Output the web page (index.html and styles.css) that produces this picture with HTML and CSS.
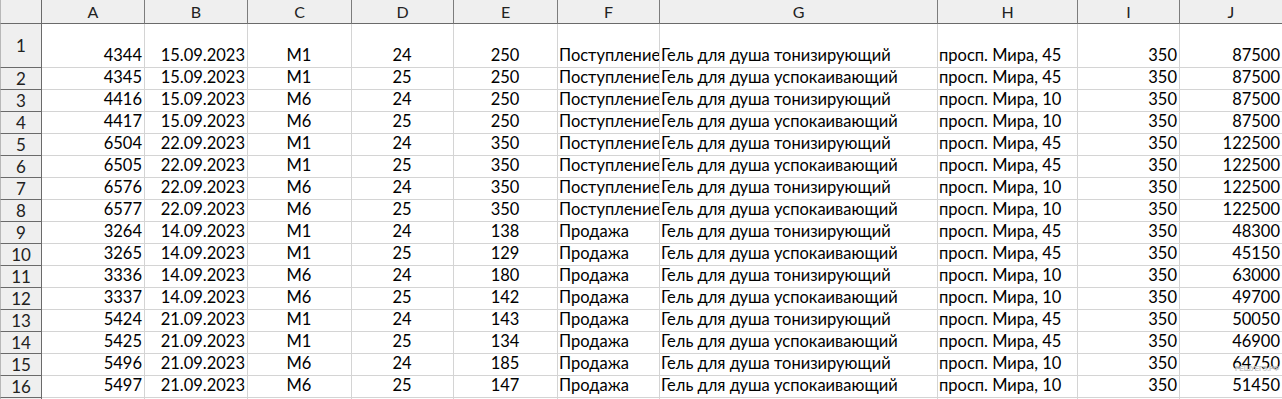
FILE: index.html
```html
<!DOCTYPE html>
<html lang="ru">
<head>
<meta charset="utf-8">
<title>Sheet</title>
<link rel="stylesheet" href="styles.css">
</head>
<body>
<div class="wrap">
<div class="sheet">
<div class="corner"></div>
<div class="ch">A</div><div class="ch">B</div><div class="ch">C</div><div class="ch">D</div><div class="ch">E</div><div class="ch">F</div><div class="ch">G</div><div class="ch">H</div><div class="ch">I</div><div class="ch">J</div>

<div class="rh">1</div><div class="c r">4344</div><div class="c r">15.09.2023</div><div class="c m">М1</div><div class="c m">24</div><div class="c m">250</div><div class="c">Поступление</div><div class="c">Гель для душа тонизирующий</div><div class="c">просп. Мира, 45</div><div class="c r">350</div><div class="c r">87500</div>
<div class="rh">2</div><div class="c r">4345</div><div class="c r">15.09.2023</div><div class="c m">М1</div><div class="c m">25</div><div class="c m">250</div><div class="c">Поступление</div><div class="c">Гель для душа успокаивающий</div><div class="c">просп. Мира, 45</div><div class="c r">350</div><div class="c r">87500</div>
<div class="rh">3</div><div class="c r">4416</div><div class="c r">15.09.2023</div><div class="c m">М6</div><div class="c m">24</div><div class="c m">250</div><div class="c">Поступление</div><div class="c">Гель для душа тонизирующий</div><div class="c">просп. Мира, 10</div><div class="c r">350</div><div class="c r">87500</div>
<div class="rh">4</div><div class="c r">4417</div><div class="c r">15.09.2023</div><div class="c m">М6</div><div class="c m">25</div><div class="c m">250</div><div class="c">Поступление</div><div class="c">Гель для душа успокаивающий</div><div class="c">просп. Мира, 10</div><div class="c r">350</div><div class="c r">87500</div>
<div class="rh">5</div><div class="c r">6504</div><div class="c r">22.09.2023</div><div class="c m">М1</div><div class="c m">24</div><div class="c m">350</div><div class="c">Поступление</div><div class="c">Гель для душа тонизирующий</div><div class="c">просп. Мира, 45</div><div class="c r">350</div><div class="c r">122500</div>
<div class="rh">6</div><div class="c r">6505</div><div class="c r">22.09.2023</div><div class="c m">М1</div><div class="c m">25</div><div class="c m">350</div><div class="c">Поступление</div><div class="c">Гель для душа успокаивающий</div><div class="c">просп. Мира, 45</div><div class="c r">350</div><div class="c r">122500</div>
<div class="rh">7</div><div class="c r">6576</div><div class="c r">22.09.2023</div><div class="c m">М6</div><div class="c m">24</div><div class="c m">350</div><div class="c">Поступление</div><div class="c">Гель для душа тонизирующий</div><div class="c">просп. Мира, 10</div><div class="c r">350</div><div class="c r">122500</div>
<div class="rh">8</div><div class="c r">6577</div><div class="c r">22.09.2023</div><div class="c m">М6</div><div class="c m">25</div><div class="c m">350</div><div class="c">Поступление</div><div class="c">Гель для душа успокаивающий</div><div class="c">просп. Мира, 10</div><div class="c r">350</div><div class="c r">122500</div>
<div class="rh">9</div><div class="c r">3264</div><div class="c r">14.09.2023</div><div class="c m">М1</div><div class="c m">24</div><div class="c m">138</div><div class="c">Продажа</div><div class="c">Гель для душа тонизирующий</div><div class="c">просп. Мира, 45</div><div class="c r">350</div><div class="c r">48300</div>
<div class="rh">10</div><div class="c r">3265</div><div class="c r">14.09.2023</div><div class="c m">М1</div><div class="c m">25</div><div class="c m">129</div><div class="c">Продажа</div><div class="c">Гель для душа успокаивающий</div><div class="c">просп. Мира, 45</div><div class="c r">350</div><div class="c r">45150</div>
<div class="rh">11</div><div class="c r">3336</div><div class="c r">14.09.2023</div><div class="c m">М6</div><div class="c m">24</div><div class="c m">180</div><div class="c">Продажа</div><div class="c">Гель для душа тонизирующий</div><div class="c">просп. Мира, 10</div><div class="c r">350</div><div class="c r">63000</div>
<div class="rh">12</div><div class="c r">3337</div><div class="c r">14.09.2023</div><div class="c m">М6</div><div class="c m">25</div><div class="c m">142</div><div class="c">Продажа</div><div class="c">Гель для душа успокаивающий</div><div class="c">просп. Мира, 10</div><div class="c r">350</div><div class="c r">49700</div>
<div class="rh">13</div><div class="c r">5424</div><div class="c r">21.09.2023</div><div class="c m">М1</div><div class="c m">24</div><div class="c m">143</div><div class="c">Продажа</div><div class="c">Гель для душа тонизирующий</div><div class="c">просп. Мира, 45</div><div class="c r">350</div><div class="c r">50050</div>
<div class="rh">14</div><div class="c r">5425</div><div class="c r">21.09.2023</div><div class="c m">М1</div><div class="c m">25</div><div class="c m">134</div><div class="c">Продажа</div><div class="c">Гель для душа успокаивающий</div><div class="c">просп. Мира, 45</div><div class="c r">350</div><div class="c r">46900</div>
<div class="rh">15</div><div class="c r">5496</div><div class="c r">21.09.2023</div><div class="c m">М6</div><div class="c m">24</div><div class="c m">185</div><div class="c">Продажа</div><div class="c">Гель для душа тонизирующий</div><div class="c">просп. Мира, 10</div><div class="c r">350</div><div class="c r">64750</div>
<div class="rh">16</div><div class="c r">5497</div><div class="c r">21.09.2023</div><div class="c m">М6</div><div class="c m">25</div><div class="c m">147</div><div class="c">Продажа</div><div class="c">Гель для душа успокаивающий</div><div class="c">просп. Мира, 10</div><div class="c r">350</div><div class="c r">51450</div>
<div class="rh"></div><div class="c"></div><div class="c"></div><div class="c"></div><div class="c"></div><div class="c"></div><div class="c"></div><div class="c"></div><div class="c"></div><div class="c"></div><div class="c"></div>
</div>
<div class="mark">РЕШУЕГЭ.РФ</div>
</div>
</body>
</html>
```
FILE: styles.css
```css
html, body {
  margin: 0;
  padding: 0;
  background: #ffffff;
  overflow: hidden;
}

.wrap {
  position: relative;
  width: 1282px;
  height: 399px;
  overflow: hidden;
}

.sheet {
  display: grid;
  grid-template-columns: 42px 103px 103px 104px 102px 104px 102px 278px 140px 102px 103px;
  grid-template-rows: 24px 44px repeat(16, 22px) 22px;
  font-family: Lato, "Noto Sans", sans-serif;
  font-size: 16.5px;
  color: #000;
}

.corner {
  background: #efefef;
  border-left: 1px solid #b8b8b8;
  border-right: 1px solid #6a6a6a;
  border-bottom: 1px solid #6a6a6a;
  box-sizing: border-box;
}

.ch {
  background: #efefef;
  border-right: 1px solid #7c7c7c;
  border-bottom: 1px solid #6a6a6a;
  box-sizing: border-box;
  display: flex;
  align-items: center;
  justify-content: center;
  color: #222;
  font-size: 16px;
  line-height: 20px;
  padding-top: 1px;
}

.rh {
  background: #efefef;
  border-left: 1px solid #b8b8b8;
  border-right: 1px solid #6a6a6a;
  border-bottom: 1px solid #6a6a6a;
  box-sizing: border-box;
  display: flex;
  align-items: center;
  justify-content: center;
  color: #222;
  font-size: 17px;
  line-height: 20px;
}

.c {
  border-right: 1px solid #d4d4d4;
  border-bottom: 1px solid #d4d4d4;
  box-sizing: border-box;
  display: flex;
  align-items: flex-end;
  justify-content: flex-start;
  padding: 0 2px 2px 1px;
  line-height: 20px;
  white-space: nowrap;
  overflow: hidden;
}

.c.r {
  justify-content: flex-end;
}

.c.m {
  justify-content: center;
}

.mark {
  position: absolute;
  left: 1235px;
  top: 365px;
  font-family: "Liberation Sans", Arial, sans-serif;
  font-weight: bold;
  font-size: 7px;
  letter-spacing: -0.3px;
  color: #c6c6c6;
  line-height: 8px;
}
```
